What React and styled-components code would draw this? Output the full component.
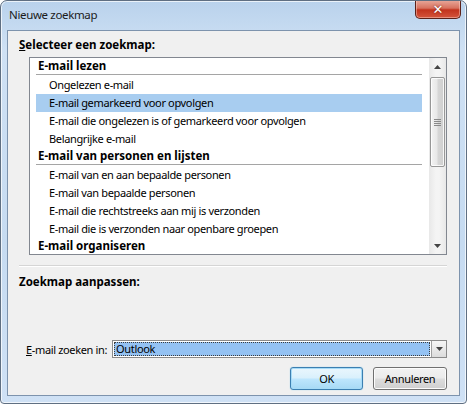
import styled, { createGlobalStyle } from 'styled-components';

const GlobalStyle = createGlobalStyle`
  html, body {
    margin: 0;
    padding: 0;
    background: #ffffff;
  }
  body {
    font-family: "Noto Sans", "Open Sans", sans-serif;
    font-size: 11px;
    letter-spacing: -0.35px;
    color: #000;
  }
`;

const Window = styled.div`
  width: 467px;
  height: 404px;
  box-sizing: border-box;
  display: flex;
  flex-direction: column;
  border: 1px solid #5f6f82;
  border-radius: 7px 7px 4px 4px;
  background: linear-gradient(180deg, #b9d2ec 0%, #cfe1f4 12%, #c6dbf1 60%, #cfe1f5 100%);
  box-shadow: inset 0 0 0 1px rgba(255, 255, 255, 0.7);
  overflow: hidden;
`;

const TitleBar = styled.div`
  height: 29px;
  flex: none;
  display: flex;
  align-items: flex-start;
  justify-content: space-between;
  padding: 0 5px 0 8px;
`;

const Title = styled.span`
  margin-top: 6px;
  font-size: 11.5px;
  color: #1b1b1b;
`;

const CloseButton = styled.div`
  width: 46px;
  height: 19px;
  margin-top: -1px;
  box-sizing: border-box;
  display: flex;
  align-items: center;
  justify-content: center;
  border: 1px solid #5c2119;
  border-top: none;
  border-radius: 0 0 5px 5px;
  background: linear-gradient(180deg, #e9aa9c 0%, #d7725f 45%, #c2331d 55%, #d4553c 100%);
  box-shadow: inset 0 0 0 1px rgba(255, 220, 210, 0.45);
  color: #fff;
  font-family: "DejaVu Sans", sans-serif;
  font-weight: bold;
  font-size: 13px;
  letter-spacing: 0;
  text-shadow: 0 0 2px #6a1c10;
`;

const Client = styled.div`
  flex: 1;
  margin: 0 6px 7px 6px;
  border: 1px solid #7d93ad;
  background: #f0f0f0;
  display: flex;
  flex-direction: column;
  padding: 6px 12px 5px 11px;
`;

const GroupLabel = styled.div`
  font-weight: bold;
  font-size: 11.5px;
  letter-spacing: 0;
  line-height: 16px;
  height: 16px;
`;

const ListBox = styled.div`
  margin: 4px 0 0 10px;
  height: 198px;
  box-sizing: border-box;
  border: 1px solid #828790;
  background: #fff;
  display: flex;
  overflow: hidden;
`;

const ListItems = styled.div`
  flex: 1;
  padding: 0 7px 0 6px;
  overflow: hidden;
`;

const GroupHeader = styled.div`
  height: 17px;
  line-height: 16px;
  box-sizing: border-box;
  font-weight: bold;
  font-size: 11.5px;
  letter-spacing: 0;
  padding-left: 2px;
  border-bottom: ${(p) => (p.$last ? 'none' : '1px solid #a5a5a5')};
  margin-bottom: 1px;
  white-space: nowrap;
`;

const ListItem = styled.div`
  height: 18px;
  line-height: 18px;
  padding-left: 13px;
  background: ${(p) => (p.$selected ? '#a8cdf0' : 'transparent')};
  white-space: nowrap;
`;

const ScrollBar = styled.div`
  width: 17px;
  flex: none;
  display: flex;
  flex-direction: column;
  background: linear-gradient(90deg, #e8e8e8, #f4f4f4 40%, #f4f4f4 60%, #e8e8e8);
`;

const ArrowButton = styled.div`
  height: 17px;
  flex: none;
  display: flex;
  align-items: center;
  justify-content: center;
`;

const Track = styled.div`
  flex: 1;
  display: flex;
  flex-direction: column;
  padding: 2px 0 0 1px;
`;

const Thumb = styled.div`
  height: 90px;
  width: 15px;
  box-sizing: border-box;
  border: 1px solid #979797;
  border-radius: 2px;
  background: linear-gradient(90deg, #f3f3f3 0%, #e8e8e8 45%, #d6d6d6 55%, #cfcfcf 100%);
  box-shadow: inset 0 0 0 1px rgba(255, 255, 255, 0.8);
  display: flex;
  align-items: center;
  justify-content: center;
`;

const Separator = styled.div`
  height: 0;
  margin: 10px 0 0 0;
  border-top: 1px solid #d5d5d5;
  border-bottom: 1px solid #ffffff;
`;

const Section = styled(GroupLabel)`
  margin-top: 7px;
`;

const Spacer = styled.div`
  flex: 1;
`;

const FieldRow = styled.div`
  display: flex;
  align-items: center;
  padding-left: 7px;
  gap: 5px;
`;

const FieldLabel = styled.span`
  white-space: nowrap;
`;

const Combo = styled.div`
  flex: 1;
  height: 18px;
  box-sizing: border-box;
  border: 1px solid #8a8a8a;
  display: flex;
  background: #fff;
`;

const ComboValue = styled.div`
  flex: 1;
  margin: 1px;
  background: #94c2f3;
  outline: 1px dotted #3c3c3c;
  outline-offset: -1px;
  line-height: 14px;
  padding-left: 2px;
`;

const ComboButton = styled.div`
  width: 15px;
  flex: none;
  box-sizing: border-box;
  border-left: 1px solid #a0a0a0;
  background: linear-gradient(180deg, #f6f6f6, #dcdcdc);
  display: flex;
  align-items: center;
  justify-content: center;
`;

const ButtonRow = styled.div`
  display: flex;
  justify-content: flex-end;
  gap: 10px;
  margin-top: 9px;
`;

const Button = styled.div`
  width: ${(p) => p.$width}px;
  height: 23px;
  box-sizing: border-box;
  border-radius: 3px;
  border: 1px solid ${(p) => (p.$default ? '#3c7fb1' : '#707070')};
  background: ${(p) =>
    p.$default
      ? 'linear-gradient(180deg, #eaf6fd 0%, #d9f0fc 48%, #bee6fd 52%, #a7d9f5 100%)'
      : 'linear-gradient(180deg, #f2f2f2 0%, #ebebeb 48%, #dddddd 52%, #cfcfcf 100%)'};
  box-shadow: ${(p) =>
    p.$default ? 'inset 0 0 0 1px #a6dbf7, 0 0 1px #69c0ec' : 'inset 0 0 0 1px #fcfcfc'};
  display: flex;
  align-items: center;
  justify-content: center;
`;

const Grip = () => (
  <svg width="7" height="7" viewBox="0 0 7 7">
    {[0, 2, 4, 6].map((y) => (
      <line key={y} x1="0" y1={y + 0.5} x2="7" y2={y + 0.5} stroke="#8a8a8a" strokeWidth="1" />
    ))}
  </svg>
);

const Arrow = ({ up }) => (
  <svg width="7" height="4" viewBox="0 0 7 4">
    <path d={up ? 'M0 4 L3.5 0 L7 4 Z' : 'M0 0 L7 0 L3.5 4 Z'} fill="#444" />
  </svg>
);

const groups = [
  {
    title: 'E-mail lezen',
    items: [
      'Ongelezen e-mail',
      'E-mail gemarkeerd voor opvolgen',
      'E-mail die ongelezen is of gemarkeerd voor opvolgen',
      'Belangrijke e-mail',
    ],
  },
  {
    title: 'E-mail van personen en lijsten',
    items: [
      'E-mail van en aan bepaalde personen',
      'E-mail van bepaalde personen',
      'E-mail die rechtstreeks aan mij is verzonden',
      'E-mail die is verzonden naar openbare groepen',
    ],
  },
  { title: 'E-mail organiseren', items: [] },
];

const App = () => (
  <>
    <GlobalStyle />
    <Window>
      <TitleBar>
        <Title>Nieuwe zoekmap</Title>
        <CloseButton>✕</CloseButton>
      </TitleBar>
      <Client>
        <GroupLabel>
          <u>S</u>electeer een zoekmap:
        </GroupLabel>
        <ListBox>
          <ListItems>
            {groups.map((g, gi) => (
              <div key={g.title}>
                <GroupHeader $last={gi === groups.length - 1}>{g.title}</GroupHeader>
                {g.items.map((item) => (
                  <ListItem key={item} $selected={item === 'E-mail gemarkeerd voor opvolgen'}>
                    {item}
                  </ListItem>
                ))}
              </div>
            ))}
          </ListItems>
          <ScrollBar>
            <ArrowButton>
              <Arrow up />
            </ArrowButton>
            <Track>
              <Thumb>
                <Grip />
              </Thumb>
            </Track>
            <ArrowButton>
              <Arrow />
            </ArrowButton>
          </ScrollBar>
        </ListBox>
        <Separator />
        <Section>Zoekmap aanpassen:</Section>
        <Spacer />
        <FieldRow>
          <FieldLabel>
            <u>E</u>-mail zoeken in:
          </FieldLabel>
          <Combo>
            <ComboValue>Outlook</ComboValue>
            <ComboButton>
              <Arrow />
            </ComboButton>
          </Combo>
        </FieldRow>
        <ButtonRow>
          <Button $default $width={73}>OK</Button>
          <Button $width={74}>Annuleren</Button>
        </ButtonRow>
      </Client>
    </Window>
  </>
);

export default App;
